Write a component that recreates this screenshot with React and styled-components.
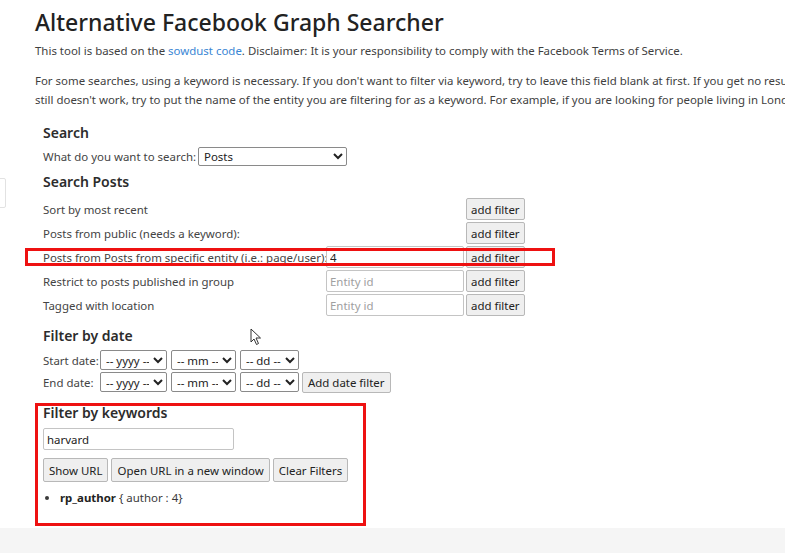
import React from "react";
import styled, { createGlobalStyle } from "styled-components";

const Global = createGlobalStyle`
  html, body {
    margin: 0;
    padding: 0;
    background: #ffffff;
    overflow: hidden;
  }
  body {
    font-family: "Noto Sans", "Open Sans", sans-serif;
    color: #3a3a3a;
  }
`;

const Page = styled.div`
  position: relative;
  width: 785px;
  height: 553px;
  overflow: hidden;
  display: flex;
  flex-direction: column;
`;

const Main = styled.main`
  width: 1150px;
  padding: 6px 0 0 35px;
  flex: 1;
`;

const Title = styled.h1`
  margin: 0;
  font-size: 23px;
  font-weight: 500;
  color: #222;
  line-height: 32px;
`;

const Text = styled.p`
  margin: ${(p) => p.$mt || 0}px 0 0;
  font-size: 11.45px;
  line-height: 19px;
  color: #3f3f3f;
`;

const Link = styled.a`
  color: #3a86d4;
  text-decoration: none;
`;

const Form = styled.div`
  padding-left: 8px;
  margin-top: 14px;
  width: 500px;
`;

const Heading = styled.h3`
  margin: ${(p) => p.$mt || 0}px 0 0;
  font-size: 14px;
  font-weight: 600;
  color: #2c2c2c;
  line-height: 20px;
`;

const Label = styled.span`
  font-size: 11.45px;
  color: #444;
  white-space: nowrap;
  width: ${(p) => (p.$w ? `${p.$w}px` : "auto")};
`;

const Inline = styled.div`
  display: flex;
  align-items: center;
  gap: ${(p) => p.$gap ?? 4}px;
  height: ${(p) => p.$h || 22}px;
  margin-top: ${(p) => p.$mt || 0}px;
`;

const Select = styled.select`
  font-family: inherit;
  font-size: 11.45px;
  color: #222;
  width: ${(p) => p.$w}px;
  height: ${(p) => p.$h || 20}px;
  padding: 0 1px;
  border: 1px solid #8a8a8a;
  border-radius: 2px;
  background: #fff;
`;

const FilterGrid = styled.div`
  display: grid;
  grid-template-columns: 281px 138px auto;
  column-gap: 2px;
  margin-top: 5px;
`;

const FilterRow = styled.div`
  display: contents;
`;

const Cell = styled.div`
  height: 24px;
  display: flex;
  align-items: center;
  position: relative;
`;

const Highlight = styled.div`
  position: absolute;
  z-index: 2;
  left: -18px;
  top: 3px;
  width: 530px;
  height: 18px;
  border: 3px solid #ee1111;
  box-sizing: border-box;
  pointer-events: none;
`;

const TextInput = styled.input`
  font-family: inherit;
  font-size: 11.45px;
  color: #222;
  box-sizing: border-box;
  width: ${(p) => p.$w || 138}px;
  height: ${(p) => p.$h || 22}px;
  margin-top: ${(p) => p.$mt || 0}px;
  padding: 0 3px;
  border: 1px solid #c4c4c4;
  border-radius: 2px;
  background: #fff;
  display: block;
  &::placeholder {
    color: #a0a0a0;
  }
`;

const Button = styled.button`
  font-family: inherit;
  font-size: 11.45px;
  color: #222;
  height: ${(p) => p.$h || 22}px;
  padding: 0 ${(p) => p.$px ?? 4}px;
  margin-left: ${(p) => p.$ml || 0}px;
  border: 1px solid #b8b8b8;
  border-radius: 2px;
  background: #efefef;
  white-space: nowrap;
`;

const KeywordBox = styled.section`
  margin: 10px 0 0 -8px;
  width: 331px;
  height: 123px;
  box-sizing: border-box;
  border: 3px solid #ee1111;
  padding: 0 0 0 5px;
`;

const Results = styled.ul`
  margin: 7px 0 0;
  padding: 0 0 0 17px;
  font-size: 11.45px;
  line-height: 18px;
  li::marker {
    font-size: 11px;
  }
`;

const Key = styled.b`
  font-weight: 700;
  color: #222;
`;

const Footer = styled.footer`
  height: 25px;
  background: #f5f5f5;
`;

const EdgeTab = styled.div`
  position: absolute;
  left: -10px;
  top: 178px;
  width: 14px;
  height: 28px;
  border: 1px solid #e2e2e2;
  border-radius: 2px;
`;

const Cursor = styled.svg`
  position: absolute;
  left: 250px;
  top: 328px;
`;

const filters = [
  { label: "Sort by most recent" },
  { label: "Posts from public (needs a keyword):" },
  { label: "Posts from Posts from specific entity (i.e.: page/user):", input: true, value: "4", highlight: true },
  { label: "Restrict to posts published in group", input: true },
  { label: "Tagged with location", input: true },
];

function DateSelects() {
  return (
    <>
      <Select $w={67} defaultValue="">
        <option value="">-- yyyy --</option>
      </Select>
      <Select $w={65} defaultValue="">
        <option value="">-- mm --</option>
      </Select>
      <Select $w={59} defaultValue="">
        <option value="">-- dd --</option>
      </Select>
    </>
  );
}

export default function App() {
  return (
    <Page>
      <Global />
      <EdgeTab />
      <Main>
        <Title>Alternative Facebook Graph Searcher</Title>
        <Text $mt={3}>
          This tool is based on the <Link href="#">sowdust code</Link>. Disclaimer: It is your responsibility to comply with the Facebook Terms of Service.
        </Text>
        <Text $mt={11}>
          For some searches, using a keyword is necessary. If you don't want to filter via keyword, try to leave this field blank at first. If you get no results, try again with a keyword. If it
          <br />
          still doesn't work, try to put the name of the entity you are filtering for as a keyword. For example, if you are looking for people living in London, try to put London as a keyword.
        </Text>

        <Form>
          <Heading>Search</Heading>
          <Inline $gap={2} $h={20} $mt={3}>
            <Label>What do you want to search:</Label>
            <Select $w={149} $h={19} defaultValue="posts">
              <option value="posts">Posts</option>
            </Select>
          </Inline>
          <Heading $mt={6}>Search Posts</Heading>

          <FilterGrid>
            {filters.map((f) => (
              <FilterRow key={f.label}>
                <Cell>
                  {f.highlight && <Highlight />}
                  <Label>{f.label}</Label>
                </Cell>
                <Cell>
                  {f.input && (
                    <TextInput
                      placeholder={f.value ? undefined : "Entity id"}
                      defaultValue={f.value}
                    />
                  )}
                </Cell>
                <Cell>
                  <Button>add filter</Button>
                </Cell>
              </FilterRow>
            ))}
          </FilterGrid>

          <Heading $mt={9}>Filter by date</Heading>
          <Inline $gap={4} $h={20} $mt={4}>
            <Label $w={53}>Start date:</Label>
            <DateSelects />
          </Inline>
          <Inline $gap={4} $h={22} $mt={1}>
            <Label $w={53}>End date:</Label>
            <DateSelects />
            <Button $h={21} $ml={-1} $px={5}>Add date filter</Button>
          </Inline>

          <KeywordBox>
            <Heading $mt={-3}>Filter by keywords</Heading>
            <TextInput $w={191} $h={22} $mt={5} defaultValue="harvard" />
            <Inline $gap={3} $h={24} $mt={8}>
              <Button $h={24} $px={5}>Show URL</Button>
              <Button $h={24} $px={5}>Open URL in a new window</Button>
              <Button $h={24} $px={5}>Clear Filters</Button>
            </Inline>
            <Results>
              <li>
                <Key>rp_author</Key> {"{ author : 4}"}
              </li>
            </Results>
          </KeywordBox>
        </Form>
      </Main>
      <Footer />
      <Cursor width="12" height="18" viewBox="0 0 12 18">
        <path d="M1 1 L1 14 L4 11 L6.5 16.5 L8.5 15.5 L6 10 L10.5 10 Z" fill="#fff" stroke="#333" strokeWidth="1" strokeLinejoin="round" />
      </Cursor>
    </Page>
  );
}
